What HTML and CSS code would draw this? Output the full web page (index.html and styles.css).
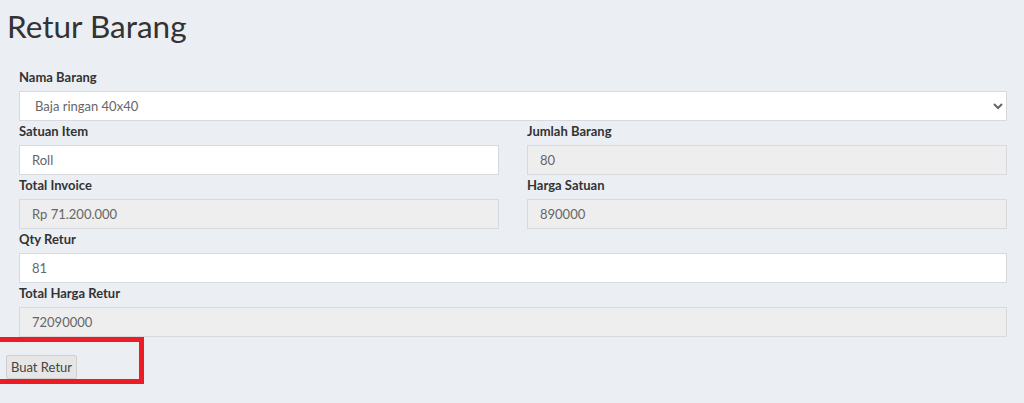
FILE: index.html
```html
<!DOCTYPE html>
<html lang="en">
<head>
  <meta charset="UTF-8">
  <meta name="viewport" content="width=device-width, initial-scale=1.0">
  <title>Retur Barang</title>
  <link rel="stylesheet" href="styles.css">
</head>
<body>
  <!-- Page Header -->
  <h1 class="page-title">Retur Barang</h1>

  <!-- Retur Form -->
  <form class="retur-form">
    <div class="form-group">
      <label for="nama">Nama Barang</label>
      <select id="nama" class="form-control">
        <option>Baja ringan 40x40</option>
      </select>
    </div>

    <div class="form-row">
      <div class="form-group">
        <label for="satuan">Satuan Item</label>
        <input type="text" id="satuan" class="form-control" value="Roll">
      </div>
      <div class="form-group">
        <label for="jumlah">Jumlah Barang</label>
        <input type="text" id="jumlah" class="form-control" value="80" readonly>
      </div>
      <div class="form-group">
        <label for="invoice">Total Invoice</label>
        <input type="text" id="invoice" class="form-control" value="Rp 71.200.000" readonly>
      </div>
      <div class="form-group">
        <label for="harga">Harga Satuan</label>
        <input type="text" id="harga" class="form-control" value="890000" readonly>
      </div>
    </div>

    <div class="form-group">
      <label for="qty">Qty Retur</label>
      <input type="text" id="qty" class="form-control" value="81">
    </div>

    <div class="form-group">
      <label for="total">Total Harga Retur</label>
      <input type="text" id="total" class="form-control" value="72090000" readonly>
    </div>
  </form>

  <div class="actions">
    <button type="button" class="btn">Buat Retur</button>
  </div>

  <!-- Highlight box around the button -->
  <div class="highlight"></div>
</body>
</html>
```

FILE: styles.css
```css
/* General Page Styling */
body {
  margin: 0;
  background: #ebeef3;
  font-family: Lato, "Noto Sans", sans-serif;
  color: #333;
  position: relative;
  height: 403px;
  overflow: hidden;
}

.page-title {
  margin: 0;
  padding: 6px 0 0 7px;
  font-size: 31.5px;
  font-weight: 400;
  line-height: 40px;
  color: #333;
}

/* Form Styling */
.retur-form {
  padding: 21px 17px 0 19px;
}

.form-group label {
  display: block;
  font-size: 13px;
  font-weight: 700;
  line-height: 18px;
  padding-top: 1px;
  margin-bottom: 5px;
}

.form-row {
  display: grid;
  grid-template-columns: 1fr 1fr;
  column-gap: 28px;
}

.form-control {
  display: block;
  width: 100%;
  height: 30px;
  box-sizing: border-box;
  padding: 0 12px;
  font-family: inherit;
  font-size: 13px;
  color: #666;
  background: #fff;
  border: 1px solid #d6d9de;
  border-radius: 0;
}

select.form-control {
  padding-left: 11px;
}

.form-control[readonly] {
  background: #eeeeee;
}

.form-control:focus {
  outline: none;
}

/* Button Styling */
.actions {
  padding: 18px 0 0 6px;
}

.btn {
  width: 71px;
  height: 24px;
  padding: 0;
  font-family: inherit;
  font-size: 13px;
  color: #444;
  background: #e6e6e6;
  border: 1px solid #cfcfcf;
  border-radius: 2px;
  cursor: pointer;
}

.highlight {
  position: absolute;
  left: -6px;
  top: 337px;
  width: 140px;
  height: 37px;
  border: 5px solid #ed1c24;
}
```
